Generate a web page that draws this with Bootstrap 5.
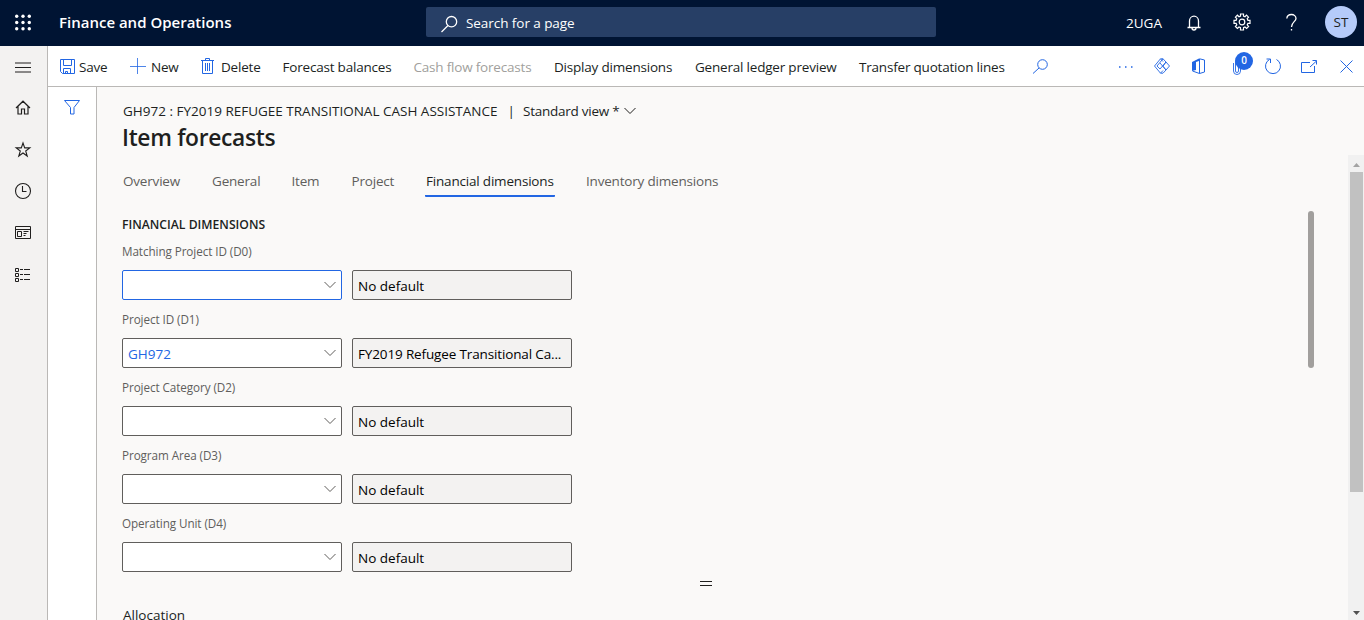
<!DOCTYPE html>
<html lang="en">
<head>
<meta charset="utf-8">
<meta name="viewport" content="width=device-width, initial-scale=1">
<title>Item forecasts - Finance and Operations</title>
<link href="https://cdn.jsdelivr.net/npm/bootstrap@5.3.0/dist/css/bootstrap.min.css" rel="stylesheet">
<style>
:root{--accent:#2266e3;--ink:#201f1e;--rule:#bab8b6}
body{height:620px;overflow:hidden;background:#faf9f8;color:var(--ink);font:13.5px/20px "Open Sans","Noto Sans",sans-serif;white-space:nowrap}
svg{display:block;fill:none;stroke:currentColor;flex:none;overflow:visible}
.topbar{height:46px;background:#001433;color:#fff;display:grid;grid-template-columns:59px 367px 510px 190px 57px 50px 49px 43px 39px;align-items:center;padding-bottom:2px}
.brand{font-size:15px;font-weight:600}
.search-box{height:30px;background:#273f66;border-radius:2px;padding-left:15px}
.search-box span{padding-top:2px;letter-spacing:-.06px}
.company{padding-top:2px}
.avatar{width:32px;height:32px;background:#b5cbfa;color:#201f1e;font-size:13.5px}
.rail{width:48px;background:#f3f2f1;border-right:1px solid var(--rule)}
.rail>div{height:42px;padding-left:15px}
.rail>div:first-child{height:40px;padding-top:3px}
.toolbar{height:41px;border-bottom:1px solid var(--rule);background:#fff;display:grid;align-items:center;grid-template-columns:12px 19px 51px 21px 50px 20px 61.500px 131px 140.500px 141px 164px 174px 85px 36px 38px 40px 33px 36px 39px 24px;padding-top:1px;letter-spacing:-.2px}
.toolbar svg{color:var(--accent)}
.toolbar .off{color:#a19f9d}
.filterpane{width:49px;background:#fff;border-right:1px solid var(--rule);padding:13px 0 0 16px;color:var(--accent)}
.pagehead{height:68px;padding:14px 0 0 26px}
.pagehead h1{font-size:22.8px;line-height:32px;font-weight:600;margin:1px 0 0 -1px;letter-spacing:-.32px}
.pagehead .sep{width:25.500px;padding-left:10px}
.viewname{letter-spacing:-.25px;width:101px}
.formpane{height:465px;overflow:hidden;padding-left:25px}
.tabs{display:grid;grid-template-columns:89px 79.500px 60px 74.500px 160px 140px;height:42px;padding:16px 0 0 1px;color:#605e5c;letter-spacing:-.19px}
.tabs .on{color:var(--ink);width:130px;height:26px;border-bottom:2px solid var(--accent);margin-left:-1px;padding-left:1px;border-radius:1px}
.section-title{font-size:12.200px;font-weight:600;line-height:18px;margin:19px 0 8px}
.fieldrow{height:68px}
.fieldrow label{display:block;font-size:11.700px;line-height:18px;height:28px;color:#605e5c;letter-spacing:-.08px}
.fieldpair{gap:10px}
.fieldbox{width:220px;height:30px;border:1px solid #605e5c;border-radius:2px;background:#fff;padding:5px 5px 0}
.fieldbox.ro{background:#f3f2f1;color:#000}
.fieldbox.active{border-color:var(--accent)}
.fieldbox.id{color:var(--accent)}
.fieldbox svg{color:#605e5c;margin-top:-2px}
.long{letter-spacing:-.14px}
.formscroll{width:6px;height:157px;border-radius:3px;background:#a19f9d;margin:56px 34px 0 0}
.pagescroll{width:16px;height:465px;background:#f1f1f1;padding:7px 0 4px 2px}
.pagescroll .thumb{width:13px;height:320px;background:#c1c1c1;margin-top:5px}
.count{left:3px;top:-7px;width:18px;height:18px;background:var(--accent);color:#fff;font-size:10px;font-weight:600;line-height:17px}
.grip{width:12px;height:5px;border-top:1px solid var(--ink);border-bottom:1px solid var(--ink);margin:-1px 0 19px 578px}
.alloc{padding-left:1px}
</style>
</head>
<body class="d-flex flex-column">
<header class="topbar flex-shrink-0">
  <svg class="ms-3" width="16" height="16"><g fill="#fff" stroke="none"><circle cx=".7" cy="2.300" r="1.700"/><circle cx="7" cy="2.300" r="1.700"/><circle cx="13.300" cy="2.300" r="1.700"/><circle cx=".7" cy="8.500" r="1.700"/><circle cx="7" cy="8.500" r="1.700"/><circle cx="13.300" cy="8.500" r="1.700"/><circle cx=".7" cy="14.700" r="1.700"/><circle cx="7" cy="14.700" r="1.700"/><circle cx="13.300" cy="14.700" r="1.700"/></g></svg>
  <div class="brand">Finance and Operations</div>
  <div class="search-box d-flex align-items-center"><svg width="17" height="17" class="mt-1" stroke-width="1.300"><circle cx="10.500" cy="5.700" r="5.200"/><path d="M7 9.500.500 16"/></svg><span class="ms-2">Search for a page</span></div>
  <div></div>
  <div class="company">2UGA</div>
  <svg width="16" height="17" stroke-width="1.300" class="ms-1"><path d="M2.500 13V7a4.500 4.800 0 0 1 9 0v6M.500 13.500h13M5 14a2 2 0 0 0 4 0"/></svg>
  <svg width="18" height="18" viewBox="0 0 18 18" stroke-width="1.200"><path d="M7.500 1h3v2l1.500.7 1.500-1.500 2 2L14.200 5.700l.7 1.600H17v3h-2.100l-.7 1.600 1.400 1.500-2 2-1.600-1.400-1.500.7V17h-3v-2.300L6 14l-1.600 1.400-2-2 1.400-1.500-.7-1.600H1v-3h2.100l.7-1.600-1.400-1.500 2-2L6 3.700 7.500 3z"/><circle cx="9" cy="9" r="2.800"/></svg>
  <svg width="12" height="18" stroke-width="1.300" class="ms-1"><path d="M.8 5.500A4.700 4.400 0 0 1 5.500 1.500a4.400 4 0 0 1 4.500 4c0 3-4.500 3.600-4.500 8.500M5.500 16v1.500"/></svg>
  <div class="avatar rounded-circle d-flex align-items-center justify-content-center">ST</div>
</header>
<div class="d-flex flex-fill">
  <nav class="rail flex-shrink-0">
    <div class="d-flex align-items-center"><svg width="16" height="11"><path d="M0 1h16M0 5.500h16M0 10h16"/></svg></div>
    <div class="d-flex align-items-center"><svg width="16" height="15" stroke-width="1.200"><path d="M1 8 8 1.200 15 8M3 6.500V14h3.500V9h3v5H13V6.500"/></svg></div>
    <div class="d-flex align-items-center"><svg width="16" height="15" stroke-width="1.100"><path d="m8 1 1.700 4.900h5.100l-4.100 3.100 1.500 5L8 11l-4.200 3 1.500-5L1.200 5.900h5.100z"/></svg></div>
    <div class="d-flex align-items-center"><svg width="16" height="16" stroke-width="1.100"><circle cx="8" cy="8" r="7.500"/><path d="M7.500 3v5.500h4"/></svg></div>
    <div class="d-flex align-items-center"><svg width="16" height="14"><path d="M.5.500h15v12H.5zM.5 3.500h15M2.500 5.500h4v5h-4zM8.500 5.500h5M8.500 7.500h3M8.500 9.500h2"/></svg></div>
    <div class="d-flex align-items-center"><svg width="16" height="14"><path d="M.5.500h3v3h-3zM.5 5.500h3v3h-3zM.5 10.500h3v3h-3zM5 1.500h3m1 0h6M5 6.500h3m1 0h6M5 11.500h3m1 0h6"/></svg></div>
  </nav>
  <div class="d-flex flex-column flex-fill">
    <div class="toolbar flex-shrink-0">
      <i></i>
      <svg width="15" height="15"><path d="M.5.500h14v14h-12l-2-2zM3.500.500v6h8v-6M3.500 14.500v-5h7v5M5.500 14.500v-2h2v2"/></svg><span>Save</span>
      <svg width="16" height="17"><path d="M7.500 0v16M0 8.500h16" stroke-opacity=".8"/></svg><span>New</span>
      <svg width="14" height="17"><path d="M0 2.500h13M4.500 2V.500h4V2M1.500 2.500v13h10v-13M4.500 5v8M6.500 5v8M8.500 5v8"/></svg><span>Delete</span>
      <span>Forecast balances</span><span class="off">Cash flow forecasts</span><span>Display dimensions</span><span>General ledger preview</span><span>Transfer quotation lines</span>
      <svg width="15" height="15"><circle cx="9.500" cy="5.500" r="4.800"/><path d="M6 9 0 14.500"/></svg>
      <svg width="16" height="5"><path d="M1 3h1.500M7 3h1.500M13 3h1.500" stroke-width="1.500"/></svg>
      <svg width="16" height="17"><path d="M9 .8H6.500L.5 8l6 7.200H9M6.500.800 9 3.500M6.500 15.200 9 12.500M9 .8l3 3.200L6 11l-3-3zM9 15.200l3-3.200L6 5M12 4l3.500 4-3.500 4-3-3.800z" stroke-width=".9"/></svg>
      <svg width="13" height="17"><path d="M0 4 7 .5V3L4 4v8l-4 1z" fill="currentColor" stroke="none"/><path d="M7.500.800 12.500 2v12l-5 1.500zM.5 13l7 2.500"/></svg>
      <div class="position-relative"><svg width="12" height="16"><path d="M1.500 4v8a3.500 3.500 0 0 0 7 0V3a2.500 2.500 0 0 0-5 0v9a1.500 1.500 0 0 0 3 0V4" stroke-width=".9"/></svg><span class="count position-absolute rounded-circle text-center">0</span></div>
      <svg width="17" height="17"><path d="M11.500 1.500a7.500 7.500 0 1 1-7 0M1.500 1h4v4"/></svg>
      <svg width="17" height="13"><path d="M9 2.500H.5v10h13V6M9 7l6.500-6M11.500.500h4v4"/></svg>
      <svg width="13" height="13"><path d="m.5.500 12 12m0-12-12 12"/></svg>
    </div>
    <div class="d-flex flex-fill">
      <aside class="filterpane flex-shrink-0"><svg width="16" height="15"><path d="M.5.500h15L10 7.500v6.500H6.500V7.500z"/></svg></aside>
      <main class="flex-fill d-flex flex-column">
        <div class="pagehead">
          <div class="d-flex"><span>GH972 : FY2019 REFUGEE TRANSITIONAL CASH ASSISTANCE</span><span class="sep">|</span><span class="viewname">Standard view *</span><svg width="12" height="20"><path d="m.5 7 5.500 5.500L11.500 7"/></svg></div>
          <h1>Item forecasts</h1>
        </div>
        <div class="d-flex flex-fill">
          <section class="formpane flex-fill">
            <div class="tabs"><span>Overview</span><span>General</span><span>Item</span><span>Project</span><span class="on">Financial dimensions</span><span>Inventory dimensions</span></div>
            <h2 class="section-title">FINANCIAL DIMENSIONS</h2>
            <div class="fieldrow"><label>Matching Project ID (D0)</label><div class="d-flex fieldpair"><div class="fieldbox active d-flex justify-content-end"><svg width="12" height="20"><path d="m.5 8 5.500 5.500L11.500 8"/></svg></div><div class="fieldbox ro">No default</div></div></div>
            <div class="fieldrow"><label>Project ID (D1)</label><div class="d-flex fieldpair"><div class="fieldbox id d-flex justify-content-between"><span>GH972</span><svg width="12" height="20"><path d="m.5 8 5.500 5.500L11.500 8"/></svg></div><div class="fieldbox ro"><span class="long">FY2019 Refugee Transitional Ca...</span></div></div></div>
            <div class="fieldrow"><label>Project Category (D2)</label><div class="d-flex fieldpair"><div class="fieldbox d-flex justify-content-end"><svg width="12" height="20"><path d="m.5 8 5.500 5.500L11.500 8"/></svg></div><div class="fieldbox ro">No default</div></div></div>
            <div class="fieldrow"><label>Program Area (D3)</label><div class="d-flex fieldpair"><div class="fieldbox d-flex justify-content-end"><svg width="12" height="20"><path d="m.5 8 5.500 5.500L11.500 8"/></svg></div><div class="fieldbox ro">No default</div></div></div>
            <div class="fieldrow"><label>Operating Unit (D4)</label><div class="d-flex fieldpair"><div class="fieldbox d-flex justify-content-end"><svg width="12" height="20"><path d="m.5 8 5.500 5.500L11.500 8"/></svg></div><div class="fieldbox ro">No default</div></div></div>
            <div class="grip"></div>
            <div class="alloc">Allocation</div>
          </section>
          <div class="formscroll flex-shrink-0"></div>
          <div class="pagescroll d-flex flex-column flex-shrink-0"><svg width="12" height="5"><path d="M3 5h7L6.500 1z" fill="#a3a3a3" stroke="none"/></svg><div class="thumb"></div><svg class="mt-auto" width="12" height="5"><path d="M3 0h7L6.500 4z" fill="#505050" stroke="none"/></svg></div>
        </div>
      </main>
    </div>
  </div>
</div>
<script src="https://cdn.jsdelivr.net/npm/bootstrap@5.3.0/dist/js/bootstrap.bundle.min.js"></script>
</body>
</html>
